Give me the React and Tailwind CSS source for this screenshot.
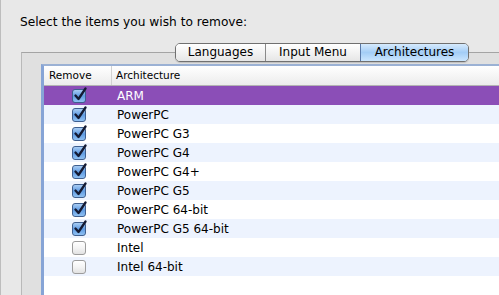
import React from 'react';

const items = [
  { name: 'ARM', checked: true },
  { name: 'PowerPC', checked: true },
  { name: 'PowerPC G3', checked: true },
  { name: 'PowerPC G4', checked: true },
  { name: 'PowerPC G4+', checked: true },
  { name: 'PowerPC G5', checked: true },
  { name: 'PowerPC 64-bit', checked: true },
  { name: 'PowerPC G5 64-bit', checked: true },
  { name: 'Intel', checked: false },
  { name: 'Intel 64-bit', checked: false },
];

function CheckBox({ checked }) {
  if (!checked) {
    return (
      <div className="w-[14px] h-[14px] rounded-[3px] border border-[#9c9c9c] bg-linear-to-b from-white via-[#f4f4f4] to-[#e2e2e2] shadow-[inset_0_1px_0_#fff]"></div>
    );
  }
  return (
    <div className="relative w-[14px] h-[14px] rounded-[3px] border border-[#3f5f8f] bg-linear-to-b from-[#a9cdf4] via-[#5f9be2] to-[#8fc0f2]">
      <svg className="absolute -top-[3px] left-[1px]" width="13" height="15" viewBox="0 0 13 15">
        <path d="M1.5 8.5 L4.5 12 L11.5 1.5" fill="none" stroke="#141a33" strokeWidth="2.3" strokeLinecap="round" strokeLinejoin="round" />
      </svg>
    </div>
  );
}

export default function App() {
  return (
    <div className="w-[499px] h-[295px] overflow-hidden bg-[#e8e8e8] border-l border-[#bdbdbd] font-['DejaVu_Sans',sans-serif] text-black">
      {/* heading */}
      <p className="pl-[19px] pt-[15px] text-[12.2px] leading-[15px]">Select the items you wish to remove:</p>

      {/* tab box */}
      <div className="ml-[20px] mt-[22px] h-[300px] border-t border-l border-t-[#a4a4a4] border-l-[#b9b9b9] bg-[#e0e0e0]">
        <div className="ml-[153px] -mt-[10px] flex w-[294px] h-[19px] rounded-[5px] border border-[#707070] overflow-hidden text-[12px] shadow-[0_1px_1px_rgba(0,0,0,0.15)]">
          <div className="w-[90px] flex items-center justify-center border-r border-[#8a8a8a] bg-linear-to-b from-white to-[#e6e6e6] pb-[1px]">Languages</div>
          <div className="w-[95px] flex items-center justify-center border-r border-[#5a79a8] bg-linear-to-b from-white to-[#e6e6e6] pb-[1px]">Input Menu</div>
          <div className="flex-1 flex items-center justify-center bg-linear-to-b from-[#d6eafd] via-[#a3cdf6] to-[#cbe6fe] pb-[1px]">Architectures</div>
        </div>

        {/* table */}
        <div className="ml-[19px] mt-[2px] h-[260px] border-l-[3px] border-t-[2px] border-l-[#86a4d6] border-t-[#9bb1d4] bg-white">
          <div className="flex h-[20px] border-b border-[#b3b3b3] bg-linear-to-b from-white to-[#ececec] text-[10.5px]">
            <div className="w-[68px] pl-[5px] flex items-center border-r border-[#d2d2d2]">Remove</div>
            <div className="pl-[4px] flex items-center">Architecture</div>
          </div>
          {items.map((it, i) => {
            const bg = i === 0 ? 'bg-[#8b4eb7] text-white' : i % 2 === 1 ? 'bg-[#edf3fe]' : 'bg-white';
            return (
              <div key={it.name} className={`flex h-[19px] items-center text-[12px] ${bg}`}>
                <div className="w-[68px] flex justify-center pl-[1px]">
                  <CheckBox checked={it.checked} />
                </div>
                <div className="pl-[5px]">{it.name}</div>
              </div>
            );
          })}
        </div>
      </div>
    </div>
  );
}
